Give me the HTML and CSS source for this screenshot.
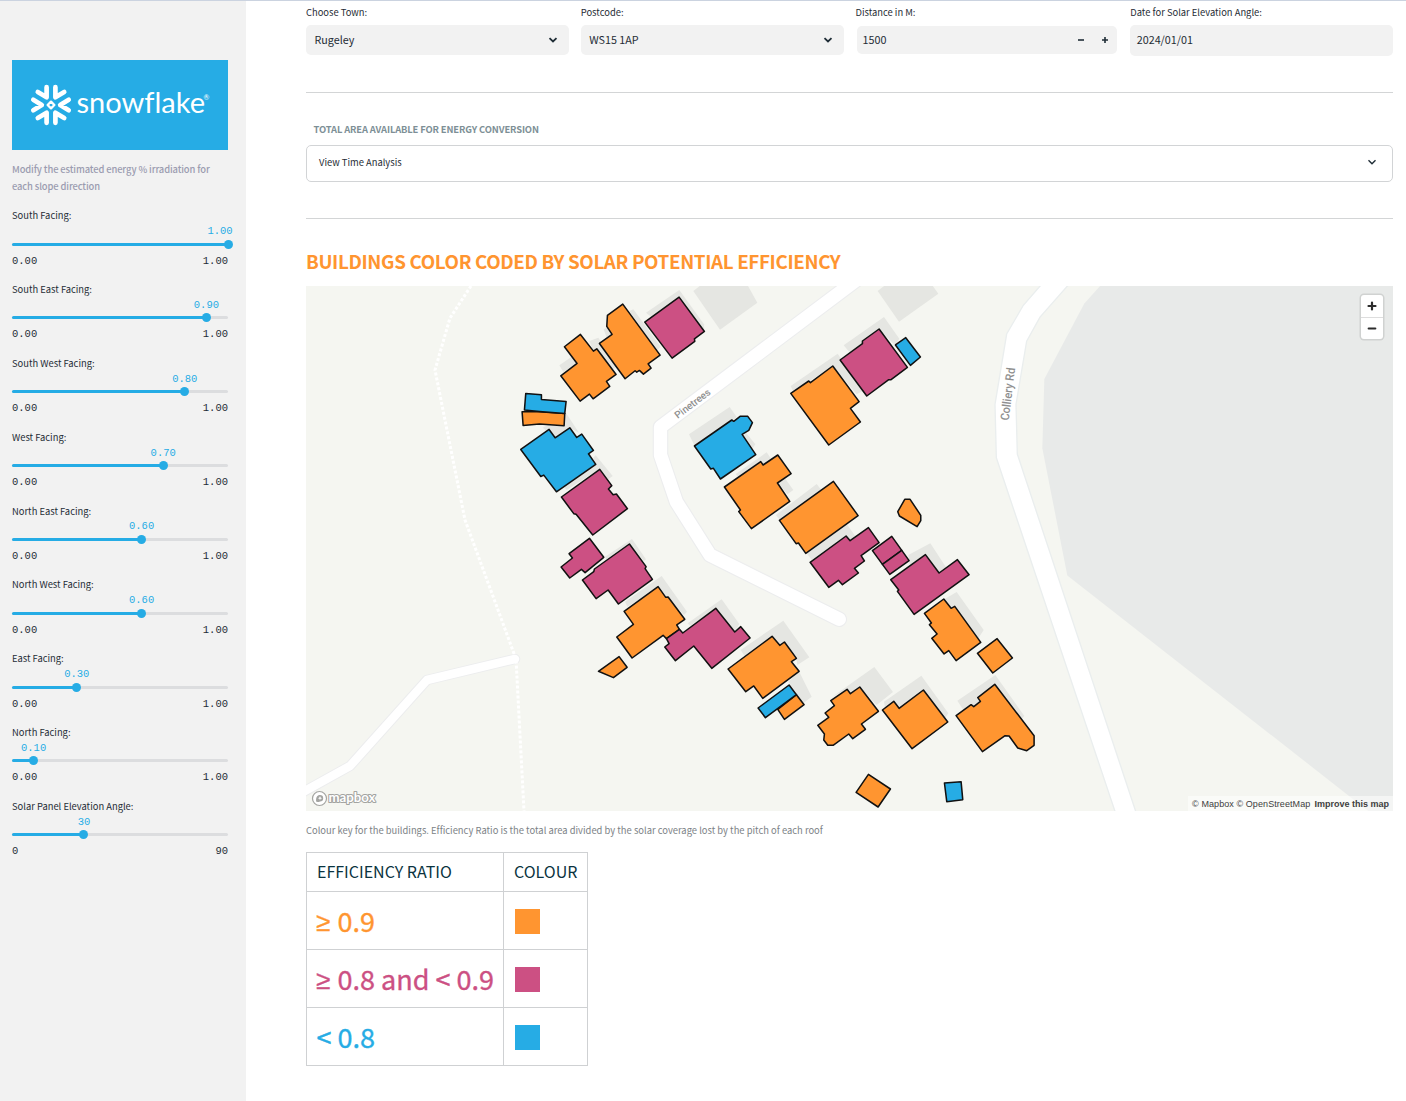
FILE: index.html
```html
<!DOCTYPE html>
<html lang="en">
<head>
<meta charset="utf-8">
<title>Solar Potential</title>
<link rel="stylesheet" href="styles.css">
</head>
<body>
<div class="app">
  <aside class="sidebar">
    <svg class="logo" viewBox="0 0 216 90" role="img" aria-label="snowflake">
      <g transform="translate(39 45)" fill="none" stroke="#fff" stroke-width="4.7" stroke-linecap="round" stroke-linejoin="round">
        <path d="M-17.7-5.2-9.2 0-17.7 5.2M17.7-5.2 9.2 0 17.7 5.2"/>
        <path d="M-13.2-13-4.4-7.8V-17.8M13.2-13 4.4-7.8V-17.8"/>
        <path d="M-13.2 13-4.4 7.8V17.8M13.2 13 4.4 7.8V17.8"/>
        <path d="M0-3.4 3.4 0 0 3.4-3.4 0Z" stroke-width="2.3"/>
      </g>
      <text class="logo-text" x="64.5" y="52.8" textLength="128.5" lengthAdjust="spacingAndGlyphs">snowflake</text>
      <text class="logo-mark" x="191.5" y="40.3">®</text>
    </svg>
    <p class="hint">Modify the estimated energy % irradiation for<br>each slope direction</p>

    <div class="slider"><label>South Facing:</label><div class="value-row"><span class="value" style="left:96.3%">1.00</span></div><div class="track"><div class="fill" style="width:100%"></div></div><div class="range"><span>0.00</span><span>1.00</span></div></div>
    <div class="slider"><label>South East Facing:</label><div class="value-row"><span class="value" style="left:90%">0.90</span></div><div class="track"><div class="fill" style="width:90%"></div></div><div class="range"><span>0.00</span><span>1.00</span></div></div>
    <div class="slider"><label>South West Facing:</label><div class="value-row"><span class="value" style="left:80%">0.80</span></div><div class="track"><div class="fill" style="width:80%"></div></div><div class="range"><span>0.00</span><span>1.00</span></div></div>
    <div class="slider"><label>West Facing:</label><div class="value-row"><span class="value" style="left:70%">0.70</span></div><div class="track"><div class="fill" style="width:70%"></div></div><div class="range"><span>0.00</span><span>1.00</span></div></div>
    <div class="slider"><label>North East Facing:</label><div class="value-row"><span class="value" style="left:60%">0.60</span></div><div class="track"><div class="fill" style="width:60%"></div></div><div class="range"><span>0.00</span><span>1.00</span></div></div>
    <div class="slider"><label>North West Facing:</label><div class="value-row"><span class="value" style="left:60%">0.60</span></div><div class="track"><div class="fill" style="width:60%"></div></div><div class="range"><span>0.00</span><span>1.00</span></div></div>
    <div class="slider"><label>East Facing:</label><div class="value-row"><span class="value" style="left:30%">0.30</span></div><div class="track"><div class="fill" style="width:30%"></div></div><div class="range"><span>0.00</span><span>1.00</span></div></div>
    <div class="slider"><label>North Facing:</label><div class="value-row"><span class="value" style="left:10%">0.10</span></div><div class="track"><div class="fill" style="width:10%"></div></div><div class="range"><span>0.00</span><span>1.00</span></div></div>
    <div class="slider"><label>Solar Panel Elevation Angle:</label><div class="value-row"><span class="value" style="left:33.33%">30</span></div><div class="track"><div class="fill" style="width:33.33%"></div></div><div class="range"><span>0</span><span>90</span></div></div>
  </aside>

  <main class="main">
    <div class="filters">
      <div class="field"><label>Choose Town:</label>
        <div class="control select"><span>Rugeley</span><svg class="chevron" viewBox="0 0 10 8"><path d="M1.5 2.2 5 5.5 8.5 2.2"/></svg></div></div>
      <div class="field"><label>Postcode:</label>
        <div class="control select"><span>WS15 1AP</span><svg class="chevron" viewBox="0 0 10 8"><path d="M1.5 2.2 5 5.5 8.5 2.2"/></svg></div></div>
      <div class="field"><label>Distance in M:</label>
        <div class="control number"><span>1500</span><svg class="step" viewBox="0 0 8 8"><path d="M1 4H7"/></svg><svg class="step" viewBox="0 0 8 8"><path d="M1 4H7M4 1V7"/></svg></div></div>
      <div class="field"><label>Date for Solar Elevation Angle:</label>
        <div class="control date"><span>2024/01/01</span></div></div>
    </div>
    <hr class="rule">
    <h5 class="subhead">TOTAL AREA AVAILABLE FOR ENERGY CONVERSION</h5>
    <div class="expander"><span>View Time Analysis</span><svg class="chevron thin" viewBox="0 0 10 8"><path d="M1.5 2.2 5 5.7 8.5 2.2"/></svg></div>
    <hr class="rule second">
    <h3 class="title">BUILDINGS COLOR CODED BY SOLAR POTENTIAL EFFICIENCY</h3>

    <div class="map">
      <svg class="canvas" viewBox="306 286 1087 525">
        <rect x="306" y="286" width="1087" height="525" fill="#f5f6f1"/>
        <g transform="translate(960 286) scale(.33333 .3382)">
          <path fill="#e8eae9" d="M422-2 373 52 253 275 247 480 322 856 1170 1510 1300 1610V-2Z"/>
          <path class="road-area" d="M243-3 190 57 140 142 105 350 109 508 470 1568H532L172 497 168 350 200 163 240 92 325-3Z"/>
        </g>
        <path class="casing" d="M875 266 660.5 427V455L676.3 501.7 710 555 839.3 619.3"/>
        <path class="road" d="M875 266 660.5 427V455L676.3 501.7 710 555 839.3 619.3"/>
        <path class="casing lane" d="M296 796 350 766 427 680 515 659"/>
        <path class="road lane" d="M296 796 350 766 427 680 515 659"/>
        <path class="footpath" d="M471 286 450 318 435 370 465 520 516 659 524 811"/>

        <g class="ground" transform="translate(500 286) scale(.33333)">
          <path d="M438 80 538 12 612 115 613 136 500 130Z"/>
          <path d="M388 75 400 70 482 182 470 195ZM311 130 325 122 336 145 320 155Z"/>
          <path d="M268 165 295 155 350 240 340 250 280 195ZM178 238 215 212 231 232 190 258Z"/>
          <path d="M194 375 237 440 209 425 165 455 128 425 150 414 192 419Z"/>
          <path d="M287 508 338 570 325 580 298 549 200 612 190 600 287 535 280 515Z"/>
        </g>
        <g class="ground" transform="translate(540 460) scale(.33333)">
          <path d="M195 290 276 237 318 298 312 303 268 252 200 298Z"/>
          <path d="M255 425 365 348 441 455 432 465 354 385 262 440Z"/>
          <path d="M443 490 545 418 598 492 585 515 527 447 450 497Z"/>
        </g>
        <g class="ground" transform="translate(680 286) scale(.33333)">
          <path d="M491 178 612 93 658 158 645 178 597 129 510 200Z"/>
          <path d="M332 300 473 203 548 315 530 325 458 240 340 317Z"/>
          <path d="M40 15 62-2H203L232 50 120 131Z"/>
          <path d="M593 15 615-2H757L775 23 657 107Z"/>
          <path d="M27 445 149 363 170 393 155 405 43 478ZM198 440 226 475 218 487 190 448Z"/>
        </g>
        <g class="ground" transform="translate(680 400) scale(.33333)">
          <path d="M167 222 260 157 272 175 250 192 242 185 175 232ZM315 235 340 270 322 283 295 250Z"/>
          <path d="M288 345 410 252 424 270 300 361ZM500 372 525 407 510 422 495 408 395 480 380 460Z"/>
        </g>
        <g class="ground" transform="translate(860 480) scale(.33333)">
          <path d="M145 225 211 190 258 262 237 279 196 226 150 260Z"/>
          <path d="M254 357 290 336 371 450 355 475 284 379 273 385Z"/>
          <path d="M72 665 184 587 265 700 255 715 190 630 117 685 101 664 75 684Z"/>
          <path d="M292 662 406 585 493 708 485 718 404 613 353 653 361 664 341 680 333 674 310 690Z"/>
        </g>
        <g class="ground" transform="translate(720 590) scale(.33333)">
          <path d="M62 180 190 92 268 202 232 225 229 205 193 156 179 166 156 139 75 200Z"/>
          <path d="M205 275 237 244 275 320 250 340Z"/>
          <path d="M337 320 463 231 519 306 470 345 419 291 391 311 381 298Z"/>
        </g>

        <g class="roofs" transform="translate(500.1 286.1) scale(.33333)">
          <path class="high" d="M241 145 280 195 290 188 348 265 319 286 329 301 279 338 268 324 240 345 182 269 231 232 193 182Z"/>
          <path class="high" d="M368 54 480 207 444 233 453 246 430 264 418 253 410 258 405 254 375 278 298 172 336 145 320 121 322 88Z"/>
          <path class="mid" d="M537 33 613 136 583 158 584 166 516 216 434 108Z"/>
          <path class="high" d="M66 377 116 377 194 382 192 419 118 414 69 418Z"/>
          <path class="low" d="M77 322 124 326 124 340 198 346 194 382 118 376 73 372Z"/>
          <path class="low" d="M147 430 165 455 209 425 230 454 245 444 280 493 265 503 287 535 169 617 131 567 122 571 62 490Z"/>
        </g>
        <g class="roofs" transform="translate(540.1 460) scale(.33333)">
          <path class="mid" d="M179 28 215 77 205 87 219 104 229 102 262 146 158 225 108 163 101 161 64 111Z"/>
          <path class="mid" d="M148 235 191 292 135 338 124 328 89 354 63 321 97 294 87 281Z"/>
          <path class="mid" d="M268 252 318 320 315 326 337 358 235 432 204 390 168 416 127 360 161 335 163 327Z"/>
          <path class="high" d="M354 380 377 412 384 411 434 478 410 495 418 508 379 536 369 526 276 594 230 531 280 493 252 454Z"/>
          <path class="mid" d="M527 445 584 516 602 500 630 534 515 625 461 558 406 602 374 561 387 551 379 536 418 508 428 519Z"/>
          <path class="high" d="M237 590 261 622 220 653 175 634Z"/>
        </g>
        <g class="roofs" transform="translate(680.1 286) scale(.33333)">
          <path class="mid" d="M597 129 682 244 633 281 626 281 560 330 480 222 547 173 547 165Z"/>
          <path class="low" d="M677 155 721 213 691 238 646 177Z"/>
          <path class="high" d="M458 240 537 347 511 367 541 408 446 477 332 322 386 285 391 290Z"/>
          <path class="low" d="M155 402 161 406 180 391 203 391 217 410 206 433 186 445 227 506 121 579 100 547 92 549 43 480Z"/>
        </g>
        <g class="roofs" transform="translate(680.1 400) scale(.33333)">
          <path class="high" d="M242 185 249 195 293 165 333 221 292 249 329 304 214 386 176 335 181 330 133 261Z"/>
          <path class="high" d="M460 244 534 347 377 460 355 429 348 431 298 361Z"/>
          <path class="mid" d="M498 408 510 422 565 383 597 428 543 467 553 483 523 505 535 519 487 554 475 541 446 562 390 487Z"/>
          <path class="mid" d="M635 409 665 451 607 493 577 452Z"/>
          <path class="mid" d="M665 451 687 482 629 523 607 493Z"/>
          <path class="high" d="M674 298 690 298 722 346 722 362 711 380 658 348 653 335Z"/>
        </g>
        <g class="roofs" transform="translate(860.1 480) scale(.33333)">
          <path class="mid" d="M196 224 237 279 292 239 327 284 162 403 112 334 116 330 92 299Z"/>
          <path class="high" d="M251 357 273 385 284 379 362 487 288 542 266 512 252 522 215 475 231 462 208 434 214 429 193 400Z"/>
          <path class="high" d="M411 476 457 534 398 579 352 520Z"/>
          <path class="high" d="M190 630 263 726 156 806 67 690 101 664 117 685Z"/>
          <path class="high" d="M404 613 522 767 522 796 500 812 473 804 447 768 435 767 367 815 288 707 333 674 341 680 361 664 353 653Z"/>
          <path class="low" d="M253 909 303 905 308 959 260 965Z"/>
        </g>
        <g class="roofs" transform="translate(720.1 590) scale(.33333)">
          <path class="high" d="M156 139 179 166 193 156 229 205 214 215 237 244 128 325 101 288 77 305 24 237Z"/>
          <path class="high" d="M229 314 252 344 193 388 173 358Z"/>
          <path class="low" d="M207 285 229 314 136 383 114 354Z"/>
          <path class="high" d="M381 298 391 311 419 291 475 364 424 402 436 418 398 446 386 432 339 466 323 466 311 450 313 432 293 406 326 382 315 369 343 347 332 332Z"/>
          <path class="high" d="M445 553 511 597 474 651 408 607Z"/>
        </g>

        <text class="street" transform="translate(692.5 403.5) rotate(-37)" y="3.5" textLength="42" lengthAdjust="spacingAndGlyphs">Pinetrees</text>
        <text class="street large" transform="translate(1008 394) rotate(-83)" y="4" textLength="53" lengthAdjust="spacingAndGlyphs">Colliery Rd</text>

        <g class="brand">
          <circle cx="319.5" cy="798.5" r="7" fill="#fff" stroke="#a3a4a1" stroke-width="1.2"/>
          <path d="M316.2 801.8C315.6 797.6 317.2 795 320 795A3.2 3.2 0 0 1 320 801.4C318.8 802 317.5 802.1 316.2 801.8Z" fill="#a3a4a1"/>
          <path d="M320 796.1 320.6 797.6 322.1 798.2 320.6 798.8 320 800.3 319.4 798.8 317.9 798.2 319.4 797.6Z" fill="#fff"/>
          <text x="328.5" y="802" textLength="47" lengthAdjust="spacingAndGlyphs">mapbox</text>
        </g>
      </svg>
      <div class="zoom">
        <svg viewBox="0 0 22 22"><path d="M7.5 11H14.5M11 7.5V14.5"/></svg>
        <svg viewBox="0 0 22 22"><path d="M7.5 11H14.5"/></svg>
      </div>
      <div class="attribution"><span>© Mapbox</span> <span>© OpenStreetMap</span> <strong>Improve this map</strong></div>
    </div>

    <p class="caption">Colour key for the buildings. Efficiency Ratio is the total area divided by the solar coverage lost by the pitch of each roof</p>
    <table class="key">
      <tr><th>EFFICIENCY RATIO</th><th>COLOUR</th></tr>
      <tr class="k-high"><td><span class="sign">≥</span> 0.9</td><td><span class="swatch"></span></td></tr>
      <tr class="k-mid"><td><span class="sign">≥</span> 0.8 and &lt; 0.9</td><td><span class="swatch"></span></td></tr>
      <tr class="k-low"><td>&lt; 0.8</td><td><span class="swatch"></span></td></tr>
    </table>
  </main>
</div>
</body>
</html>
```
FILE: styles.css
```css
:root {
  --blue: #26ace5;
  --orange: #ff9530;
  --pink: #cc5083;
  --ink: #1f2d36;
  --panel: #f2f2f2;
}
* { box-sizing: border-box; }
body {
  margin: 0;
  background: #fff;
  color: var(--ink);
  font-family: "Noto Sans CJK SC", "Noto Sans", sans-serif;
  font-size: 9.4px;
  line-height: 14px;
}
h3, h5, p { margin: 0; }
.app {
  display: flex;
  height: 1101px;
  overflow: hidden;
  border-top: 1px solid #cbd3e0;
}

/* sidebar */
.sidebar {
  flex: none;
  width: 246px;
  padding: 59px 18px 0 12px;
  background: var(--panel);
}
.logo { display: block; width: 216px; height: 90px; background: var(--blue); }
.logo-text { font: 28.5px Lato, sans-serif; font-variant-ligatures: none; fill: #fff; }
.logo-mark { font: 7px Lato, sans-serif; fill: #fff; }
.hint { margin-top: 11px; height: 47.3px; line-height: 17px; color: #9b9cb0; white-space: nowrap; font-weight: 500; letter-spacing: -0.11px; }
.slider { display: flex; flex-direction: column; height: 73.83px; }
.slider label { height: 14px; }
.value-row { position: relative; height: 20.3px; }
.value { position: absolute; top: 2.8px; transform: translateX(-50%); color: var(--blue); }
.value, .range { font: 10.5px/13px "Liberation Mono", monospace; }
.track { height: 3px; border-radius: 2px; background: #dcdddf; }
.fill { display: flex; align-items: center; justify-content: flex-end; height: 3px; border-radius: 2px; background: var(--blue); }
.fill::after { content: ""; flex: none; width: 9px; height: 9px; margin-right: -4.5px; border-radius: 50%; background: var(--blue); }
.range { display: flex; justify-content: space-between; margin-top: 9px; }

/* main column */
.main { flex: 1; min-width: 0; padding: 4px 13px 0 60px; }
.filters { display: grid; grid-template-columns: repeat(4, minmax(0, 1fr)); column-gap: 12px; height: 87px; }
.field label { display: block; height: 20px; line-height: 15px; }
.control { display: flex; align-items: center; height: 30px; padding: 0 8.5px; border-radius: 5px; background: var(--panel); font-size: 10.75px; }
.control span { flex: 1; }
.number { height: 28px; margin: 1px 1px 0; padding: 0 8px 0 6px; }
.date { height: 31px; padding-left: 6.5px; padding-bottom: 1px; }
.chevron { width: 10px; height: 8px; margin-right: 2.5px; fill: none; stroke: var(--ink); stroke-width: 1.8; }
.chevron.thin { margin-right: 2.8px; stroke-width: 1.4; }
.step { width: 8px; height: 8px; margin-left: 16px; fill: none; stroke: var(--ink); stroke-width: 1.6; }
.rule { height: 1px; margin: 0; border: 0; background: #d3d5d6; }
.subhead { margin: 29px 0 8px 7.5px; font-size: 9.4px; line-height: 15px; font-weight: 700; letter-spacing: -0.13px; color: #7d8f96; }
.expander { display: flex; align-items: center; justify-content: space-between; height: 37px; padding: 0 12px 3px; border: 1px solid #d2d4d6; border-radius: 5px; }
.rule.second { margin-top: 36px; }
.title { margin-top: 28px; height: 39px; font-size: 18.8px; line-height: 28px; font-weight: 700; letter-spacing: -0.36px; color: var(--orange); white-space: nowrap; }

/* map */
.map { position: relative; height: 525px; }
.canvas { display: block; width: 1087px; height: 525px; }
.road-area { fill: #fff; stroke: #eaeeee; stroke-width: 4; }
.casing, .road { fill: none; stroke-linejoin: round; stroke-linecap: round; }
.casing { stroke: #ecedee; stroke-width: 15.5; }
.road { stroke: #fff; stroke-width: 13.3; }
.casing.lane { stroke-width: 10.5; }
.road.lane { stroke-width: 8.5; }
.footpath { fill: none; stroke: #fff; stroke-width: 3; stroke-dasharray: 3 2; }
.ground { fill: #e5e6e2; }
.roofs { stroke: #111; stroke-width: 4.6; stroke-linejoin: round; }
.high { fill: var(--orange); }
.mid { fill: var(--pink); }
.low { fill: var(--blue); }
.street { font: 500 10px Roboto, sans-serif; fill: #8f8f8f; stroke: #fff; stroke-width: 1.5; paint-order: stroke; text-anchor: middle; }
.street.large { font-size: 12px; }
.brand text { font: 700 12.5px Lato, sans-serif; fill: #fff; stroke: #a3a4a1; stroke-width: 2; paint-order: stroke; stroke-linejoin: round; }
.zoom { position: absolute; top: 9px; right: 10px; width: 22px; height: 44px; border-radius: 3px; background: #fff; box-shadow: 0 0 0 1.5px rgba(0, 0, 0, .1); }
.zoom svg { display: block; width: 22px; height: 22px; fill: none; stroke: #2c2c2c; stroke-width: 2.2; stroke-linecap: round; }
.zoom svg + svg { border-top: 1px solid #ddd; }
.attribution { position: absolute; right: 0; bottom: 0; height: 15px; padding: 1px 4px 0; background: rgba(255, 255, 255, .5); font: 9px/15px "Liberation Sans", sans-serif; letter-spacing: 0.08px; color: #404040; white-space: nowrap; }
.attribution strong { margin-left: 1.5px; letter-spacing: 0; }

.caption { margin-top: 12px; line-height: 15px; letter-spacing: 0.01px; color: #7c8286; white-space: nowrap; }
.key { margin-top: 14px; border-collapse: collapse; table-layout: fixed; width: 282px; }
.key th, .key td { padding: 0 10px; border: 1px solid #cfd1d3; text-align: left; white-space: nowrap; }
.key th { height: 39px; padding-bottom: 2px; font-size: 16px; line-height: 24px; font-weight: 400; color: #0a3340; }
.key th:first-child { width: 197px; }
.key td { height: 58px; padding-left: 9.5px; font-size: 27px; line-height: 40px; -webkit-text-stroke: 0.35px currentColor; }
.sign { display: inline-block; width: 15px; height: 40px; margin-left: -0.5px; margin-right: 0.5px; font-family: "Noto Sans", sans-serif; font-size: 26px; vertical-align: top; }
.k-high { color: var(--orange); }
.k-mid { color: var(--pink); }
.k-low { color: var(--blue); }
.swatch { display: block; width: 25px; height: 25px; margin: 2px 0 0 1.5px; background: currentColor; }
```
